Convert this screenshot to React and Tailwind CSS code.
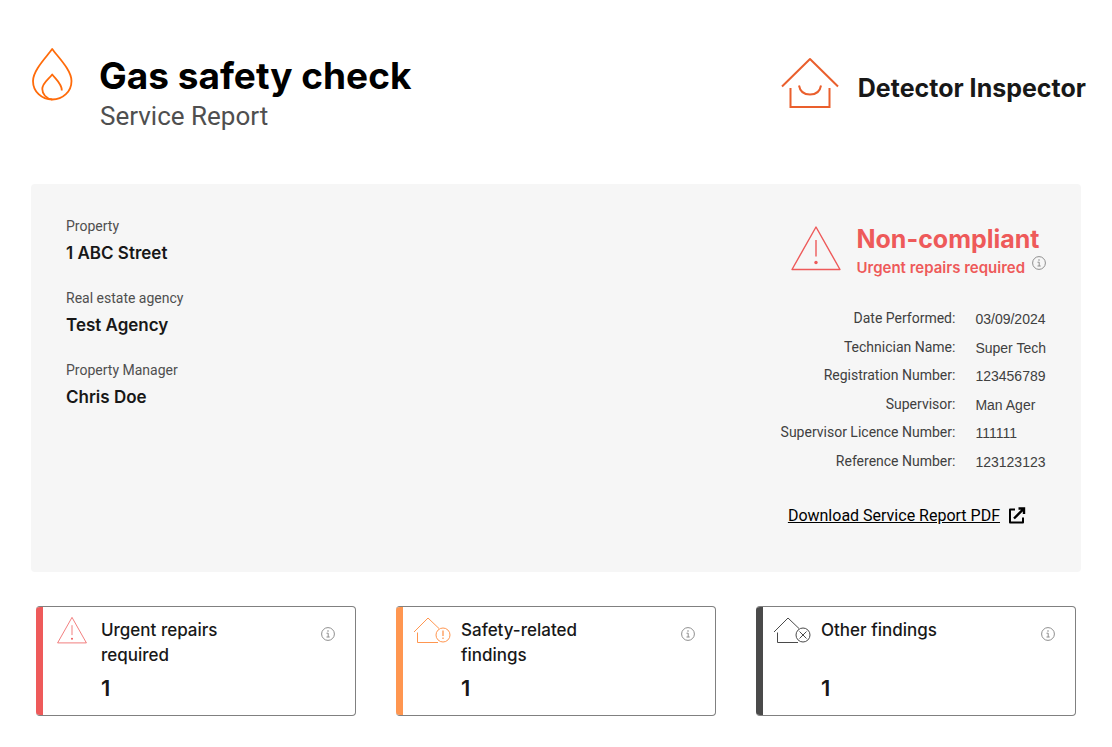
const details = [
  { label: 'Date Performed:', value: '03/09/2024' },
  { label: 'Technician Name:', value: 'Super Tech' },
  { label: 'Registration Number:', value: '123456789' },
  { label: 'Supervisor:', value: 'Man Ager' },
  { label: 'Supervisor Licence Number:', value: '111111' },
  { label: 'Reference Number:', value: '123123123' },
];

const property = [
  { label: 'Property', value: '1 ABC Street' },
  { label: 'Real estate agency', value: 'Test Agency' },
  { label: 'Property Manager', value: 'Chris Doe' },
];

const FlameIcon = () => (
  <svg width="42" height="54" viewBox="0 0 42 54" fill="none" stroke="#ff6b0a" strokeWidth="1.8" aria-hidden="true">
    <path d="M21.200 2C16 9.500 2 23 2 34C2 44.500 10.500 52.500 21.200 52.500C32 52.500 40.500 44.500 40.500 34C40.500 23 26.500 9.500 21.200 2Z" strokeLinejoin="round" />
    <path d="M21.200 52.500C15 51.500 11.300 47 11.300 42C11.300 36 18 32 21.200 27.500C25 32.500 31 37 30.800 43.500" strokeLinejoin="round" />
  </svg>
);

const LogoIcon = () => (
  <svg width="58" height="52" viewBox="0 0 58 52" fill="none" stroke="#ea5f2d" strokeWidth="2" aria-hidden="true">
    <path d="M1 29.500L29 2L57 29.500" strokeLinejoin="round" />
    <path d="M9.500 31V50H48.500V31" />
    <path d="M18 28.500C19 34.500 23.500 37.500 29 37.500C34.500 37.500 39 34.500 40 28.500" />
  </svg>
);

const WarningIcon = ({ className, color, strokeWidth }) => (
  <svg className={className} viewBox="0 0 50 46" fill="none" stroke={color} strokeWidth={strokeWidth} aria-hidden="true">
    <path d="M25 2L49 44.500H1Z" strokeLinejoin="round" />
    <path d="M25 15V31.500" />
    <circle cx="25" cy="37.500" r="1.700" fill={color} stroke="none" />
  </svg>
);

const HouseIcon = ({ color, children }) => (
  <svg className="w-[38px] h-7" viewBox="0 0 38 28" fill="none" stroke={color} aria-hidden="true">
    <path d="M1 16L15 2L26 12.500" />
    <path d="M4.500 16.500V26.500H25" />
    <circle cx="30" cy="19" r="7" />
    {children}
  </svg>
);

const InfoButton = ({ label }) => (
  <button type="button" aria-label={label} className="block shrink-0 w-[14px] h-[14px] cursor-pointer">
    <svg width="14" height="14" viewBox="0 0 14 14" fill="none" stroke="#8e8e8e" aria-hidden="true">
      <circle cx="7" cy="7" r="6.400" />
      <path d="M5.500 6.200H7.200V10M5.500 10H8.700" />
      <circle cx="7" cy="4" r="0.800" fill="#8e8e8e" stroke="none" />
    </svg>
  </button>
);

const ExternalIcon = () => (
  <svg width="18" height="18" viewBox="0 0 18 18" fill="none" stroke="#000" strokeWidth="2" aria-hidden="true">
    <path d="M7 2.500H2V15.500H15V10.500" strokeLinejoin="round" />
    <path d="M10.500 1.500H16V7M16 1.500L6 11.500" strokeWidth="2.400" />
  </svg>
);

const FindingCard = ({ title, count, accent, icon }) => (
  <section className="flex h-[110px] border border-[#808080] border-l-0 rounded overflow-hidden">
    <div className={`w-[7px] -my-px shrink-0 ${accent}`}></div>
    <div className="flex flex-1 pt-[9px] pr-5">
      <div className="w-[58px] shrink-0 flex justify-center">{icon}</div>
      <div className="flex-1 pt-0.5">
        <h2 className="h-[50px] max-w-[150px] text-[17px] leading-[25px] font-medium">{title}</h2>
        <p className="mt-1 text-[22px] leading-8 font-semibold">{count}</p>
      </div>
      <div className="pt-[11px]">
        <InfoButton label={`About ${title}`} />
      </div>
    </div>
  </section>
);

const App = () => {
  return (
    <main className="min-h-screen bg-white font-['Inter',sans-serif] text-[#181818]">
      <header className="flex items-start justify-between pt-[47px] pl-[31px] pr-[26px]">
        <div className="flex gap-[26px]">
          <FlameIcon />
          <div className="pt-1">
            <h1 className="text-[37px] leading-[50px] font-bold text-black">Gas safety check</h1>
            <p className="pl-px font-['Roboto',sans-serif] text-[26px] leading-[30px] text-[#4f4f4f]">Service Report</p>
          </div>
        </div>
        <div className="flex items-center gap-[19px] pt-2.5">
          <LogoIcon />
          <span className="pt-2.5 text-[25px] leading-8 font-bold">Detector Inspector</span>
        </div>
      </header>

      <section className="flex justify-between h-[388px] mx-[31px] mt-[53px] px-[35px] pt-8 bg-[#f6f6f6] rounded-sm">
        <dl className="flex flex-col gap-[22px]">
          {property.map((item) => (
            <div key={item.label}>
              <dt className="font-['Roboto',sans-serif] text-sm text-[#4f4f4f]">{item.label}</dt>
              <dd className="mt-1 text-[17px] leading-[26px] font-semibold">{item.value}</dd>
            </div>
          ))}
        </dl>

        <div>
          <div className="flex justify-end gap-[15px] pt-2">
            <WarningIcon className="w-[50px] h-[46px] mt-px" color="#ee5a5a" strokeWidth="1.400" />
            <div className="text-[#ee5a5a]">
              <h2 className="text-[25px] leading-[30px] font-bold">Non-compliant</h2>
              <div className="flex gap-[7px] text-[15px] leading-7 font-semibold">
                Urgent repairs required
                <div className="pt-0.5">
                  <InfoButton label="About compliance" />
                </div>
              </div>
            </div>
          </div>

          <table className="ml-auto mt-[22px] h-[171px] font-['Roboto',sans-serif] text-sm text-[#404040]">
            <tbody>
              {details.map((item) => (
                <tr key={item.label}>
                  <th scope="row" className="p-0 pr-5 text-right font-normal">{item.label}</th>
                  <td className="p-0 pt-0.5 font-['Liberation_Sans',sans-serif]">{item.value}</td>
                </tr>
              ))}
            </tbody>
          </table>

          <div className="flex justify-end mt-[29px] pr-5 font-['Roboto',sans-serif] text-base text-black">
            <a href="#download" className="flex items-center gap-2">
              <span className="underline">Download Service Report PDF</span>
              <ExternalIcon />
            </a>
          </div>
        </div>
      </section>

      <div className="grid grid-cols-3 gap-10 px-9 pt-[34px] pb-8">
        <FindingCard
          title="Urgent repairs required"
          count={1}
          accent="bg-[#ee5a5a]"
          icon={<WarningIcon className="w-[30px] h-7" color="#ee5a5a" strokeWidth="1.300" />}
        />
        <FindingCard
          title="Safety-related findings"
          count={1}
          accent="bg-[#ff9650]"
          icon={
            <HouseIcon color="#ff9650">
              <path d="M30 14.500V20M30 21.500V23" strokeWidth="1.300" />
            </HouseIcon>
          }
        />
        <FindingCard
          title="Other findings"
          count={1}
          accent="bg-[#4a4a4a]"
          icon={
            <HouseIcon color="#4a4a4a">
              <path d="M26.500 15.500L33.500 22.500M33.500 15.500L26.500 22.500" />
            </HouseIcon>
          }
        />
      </div>
    </main>
  );
};

export default App;
